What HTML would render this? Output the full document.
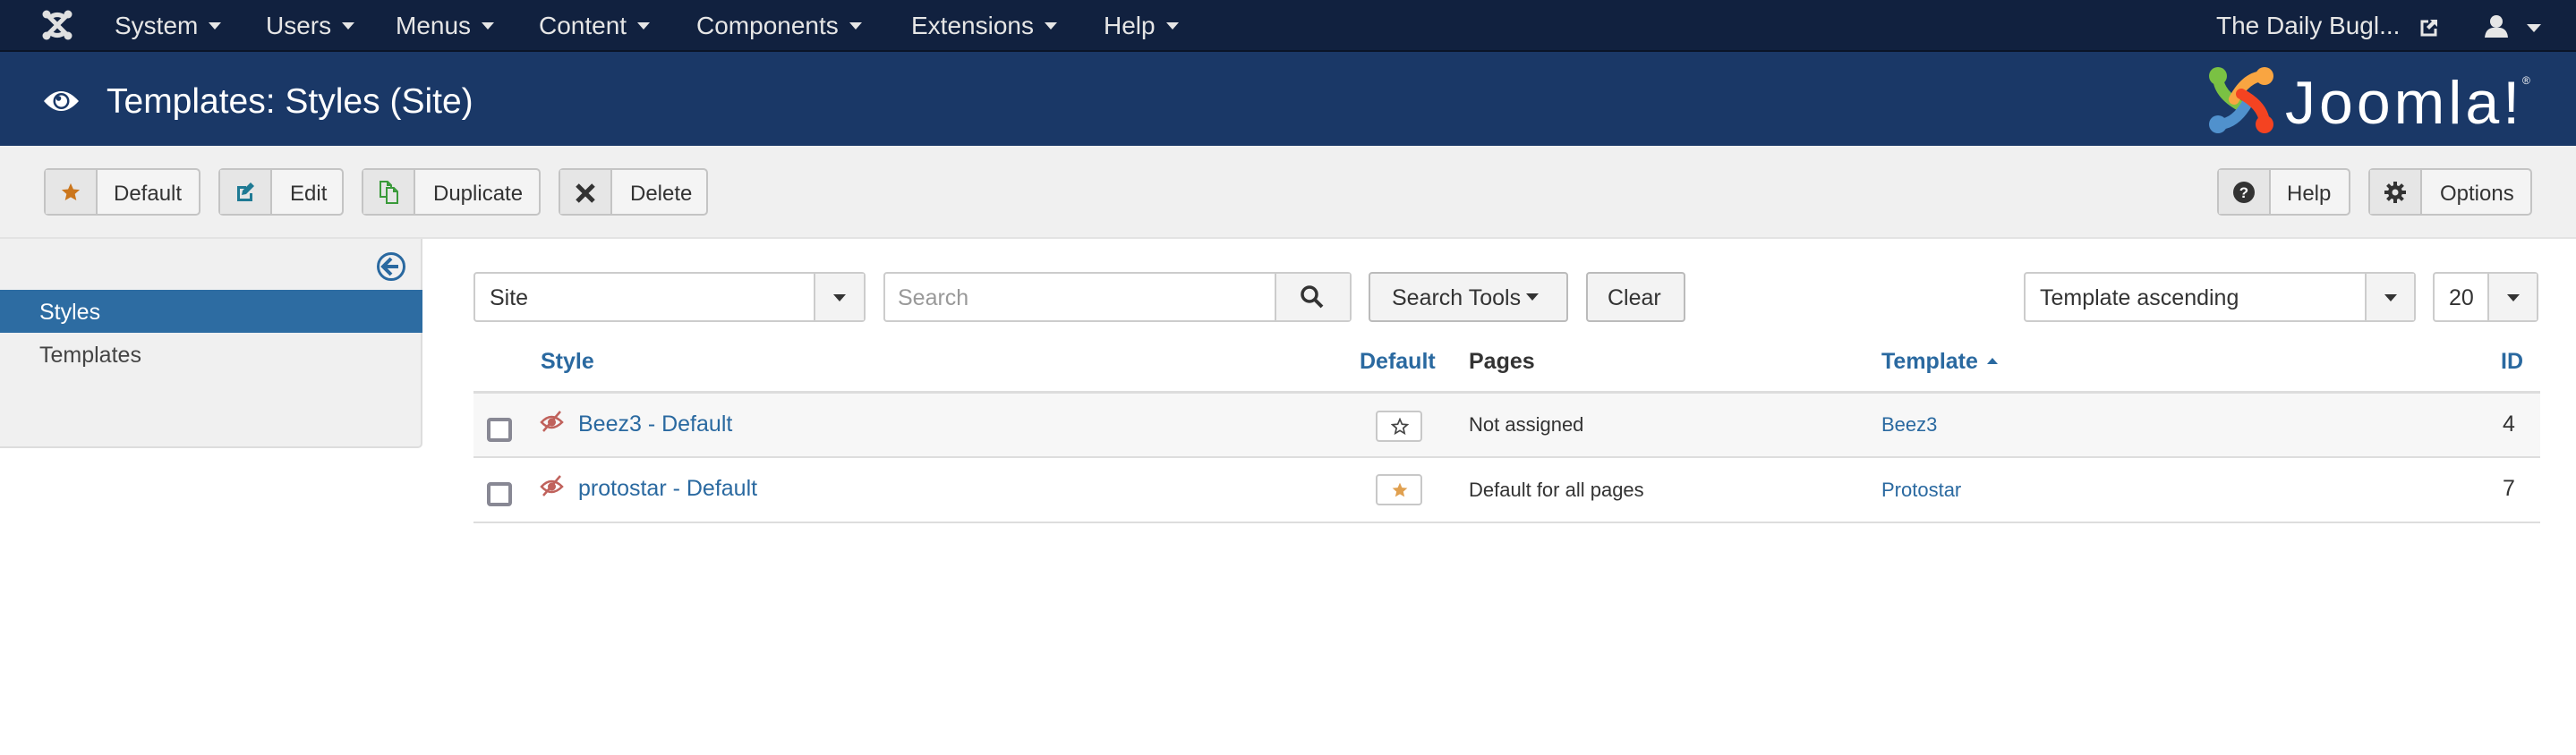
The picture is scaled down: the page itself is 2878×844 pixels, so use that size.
<!DOCTYPE html>
<html><head><meta charset="utf-8"><style>
*{box-sizing:border-box;margin:0;padding:0}
body{width:2878px;height:844px;position:relative;background:#fff;font-family:"Liberation Sans",Helvetica,Arial,sans-serif;overflow:hidden;color:#333}
.a{position:absolute;white-space:nowrap}
#nav{left:0;top:0;width:2878px;height:58px;background:#11213f;border-bottom:2px solid #0a1528}
.ni{color:#e6e6e6;font-size:28px;top:13px}
.car{display:inline-block;width:0;height:0;border-left:7px solid transparent;border-right:7px solid transparent;border-top:8px solid currentColor;vertical-align:middle;margin-left:12px;margin-top:-4px}
#hdr{left:0;top:58px;width:2878px;height:105px;background:#1a3867}
#tb{left:0;top:163px;width:2878px;height:104px;background:#f0f0f0;border-bottom:2px solid #e3e3e3}
.btn{top:188px;height:53px;border:2px solid #c4c4c4;border-radius:5px;background:#f4f4f4;font-size:24px;color:#333}
.btn .ic{position:absolute;left:0;top:0;bottom:0;background:#e6e6e6;border-right:2px solid #c4c4c4}
.btn .t{position:absolute;top:13px}
#side{left:0;top:267px;width:472px;height:234px;background:#f0f0f0;border-right:2px solid #ddd;border-bottom:2px solid #ddd;border-radius:0 0 5px 0}
.sel{height:56px;border:2px solid #ccc;border-radius:4px;background:#fff;font-size:25px;top:304px}
.sel .dd{position:absolute;top:0;bottom:0;right:0;background:#f3f3f3;border-left:2px solid #ccc}
.sel .dd:after{content:"";position:absolute;left:50%;top:50%;margin:-3px 0 0 -7px;border-left:7px solid transparent;border-right:7px solid transparent;border-top:8px solid #333}
.th{top:390px;font-size:25px;font-weight:bold;color:#2a69a0}
.lnk{color:#2a69a0}
.cb{width:28px;height:27px;border:4px solid #888894;border-radius:4px;background:#fff}
.sb{width:52px;height:35px;border:2px solid #c8c8c8;border-radius:4px;background:#fff}
</style></head><body>
<div id="nav" class="a">
<svg class="a" style="left:47px;top:11px" width="34" height="34" viewBox="0 0 34 34"><g fill="#e0e0e0"><circle cx="5" cy="5" r="4.5"/><circle cx="29" cy="5" r="4.5"/><circle cx="5" cy="29" r="4.5"/><circle cx="29" cy="29" r="4.5"/></g><g stroke="#e0e0e0" stroke-width="5" fill="none"><path d="M5 5 L27 27 M29 5 L7 27 M8 9 Q17 2 26 9 M8 25 Q17 32 26 25"/></g></svg>
<div class="a ni" style="left:128px">System<span class="car"></span></div>
<div class="a ni" style="left:297px">Users<span class="car"></span></div>
<div class="a ni" style="left:442px">Menus<span class="car"></span></div>
<div class="a ni" style="left:602px">Content<span class="car"></span></div>
<div class="a ni" style="left:778px">Components<span class="car"></span></div>
<div class="a ni" style="left:1018px">Extensions<span class="car"></span></div>
<div class="a ni" style="left:1233px">Help<span class="car"></span></div>
<div class="a ni" style="left:2476px">The Daily Bugl...</div>
<svg class="a" style="left:2704px;top:21px" width="20" height="20" viewBox="0 0 20 20"><path d="M9 3H2v15h15v-7" stroke="#e6e6e6" stroke-width="3" fill="none"/><path d="M11 1h8v8l-3-3-6 6-3-3 6-6z" fill="#e6e6e6"/></svg>
<svg class="a" style="left:2776px;top:16px" width="26" height="26" viewBox="0 0 26 26"><circle cx="13" cy="8" r="7" fill="#e6e6e6"/><path d="M0 26 Q1 16 9 15 L17 15 Q25 16 26 26Z" fill="#e6e6e6"/></svg>
<div class="a" style="left:2823px;top:27px;border-left:8px solid transparent;border-right:8px solid transparent;border-top:9px solid #e6e6e6"></div>
</div>
<div id="hdr" class="a">
<svg class="a" style="left:48px;top:41px" width="41" height="28" viewBox="0 0 41 28"><path d="M1 14 Q20 -8 40 14 Q20 36 1 14Z" fill="#fff"/><circle cx="20.5" cy="14" r="9" fill="#1a3867"/><circle cx="20.5" cy="14" r="6.5" fill="#fff"/><circle cx="17.5" cy="11" r="2.8" fill="#1a3867"/></svg>
<div class="a" style="left:119px;top:34px;font-size:39px;color:#fff">Templates: Styles (Site)</div>
<svg class="a" style="left:2466px;top:17px" width="76" height="74" viewBox="0 0 76 74"><g stroke-width="12" fill="none" stroke-linecap="round"><path d="M12 10 Q12 30 38 44" stroke="#7ac143"/><path d="M64 10 Q44 10 30 36" stroke="#f9a541"/><path d="M12 64 Q32 64 46 38" stroke="#5091cd"/><path d="M64 64 Q64 44 38 30" stroke="#f44321"/></g><circle cx="12" cy="10" r="10" fill="#7ac143"/><circle cx="64" cy="10" r="10" fill="#f9a541"/><circle cx="12" cy="64" r="10" fill="#5091cd"/><circle cx="64" cy="64" r="10" fill="#f44321"/></svg>
<div class="a" style="left:2553px;top:18px;font-size:68px;color:#fff;letter-spacing:4px">Joomla!</div>
<div class="a" style="left:2818px;top:25px;font-size:12px;color:#fff">®</div>
</div>
<div id="tb" class="a"></div>
<div class="a btn" style="left:49px;width:175px"><div class="ic" style="width:58px"><svg style="position:absolute;left:17px;top:14px" width="22" height="22" viewBox="0 0 24 24"><path d="M12 1l3.2 7.2 7.8.7-5.9 5.2 1.8 7.7L12 17.8 5.1 21.8l1.8-7.7L1 8.9l7.8-.7z" fill="#cb761c"/></svg></div><span class="t" style="left:76px">Default</span></div>
<div class="a btn" style="left:244px;width:140px"><div class="ic" style="width:58px"><svg style="position:absolute;left:16px;top:13px" width="24" height="24" viewBox="0 0 24 24"><path d="M3 5h10v3H6v11h11v-6h3v9H3z" fill="#1f7a94"/><path d="M18 1l4 4-9 9-5 1 1-5z" fill="#1f7a94"/></svg></div><span class="t" style="left:78px">Edit</span></div>
<div class="a btn" style="left:404px;width:200px"><div class="ic" style="width:58px"><svg style="position:absolute;left:18px;top:12px" width="22" height="26" viewBox="0 0 22 26"><path d="M1 1h8l4 4v13H1z M9 1v4h4" stroke="#3a9a3a" stroke-width="2" fill="none"/><path d="M8 8h8l4 4v13H8z M16 8v4h4" stroke="#3a9a3a" stroke-width="2" fill="#e6e6e6"/></svg></div><span class="t" style="left:78px">Duplicate</span></div>
<div class="a btn" style="left:624px;width:167px"><div class="ic" style="width:58px"><svg style="position:absolute;left:16px;top:14px" width="24" height="24" viewBox="0 0 24 24"><path d="M3 3L21 21M21 3L3 21" stroke="#333" stroke-width="5"/></svg></div><span class="t" style="left:78px">Delete</span></div>
<div class="a btn" style="left:2477px;width:149px"><div class="ic" style="width:58px"><svg style="position:absolute;left:16px;top:13px" width="24" height="24" viewBox="0 0 24 24"><circle cx="12" cy="12" r="12" fill="#333"/><text x="12" y="18" font-size="17" font-weight="bold" fill="#fff" text-anchor="middle" font-family="Liberation Sans">?</text></svg></div><span class="t" style="left:76px">Help</span></div>
<div class="a btn" style="left:2646px;width:183px"><div class="ic" style="width:58px"><svg style="position:absolute;left:16px;top:13px" width="24" height="24" viewBox="0 0 24 24"><g fill="#333"><circle cx="12" cy="12" r="8"/><path d="M10 0h4v24h-4zM0 10h24v4H0z"/><path d="M10 0h4v24h-4zM0 10h24v4H0z" transform="rotate(45 12 12)"/></g><circle cx="12" cy="12" r="3.5" fill="#e6e6e6"/></svg></div><span class="t" style="left:78px">Options</span></div>

<div id="side" class="a">
<svg class="a" style="left:420px;top:14px" width="34" height="34" viewBox="0 0 34 34"><circle cx="17" cy="17" r="14.5" stroke="#2a69a0" stroke-width="3" fill="none"/><path d="M17 8l-9 9 9 9M8 17h17" stroke="#2a69a0" stroke-width="4" fill="none"/></svg>
<div class="a" style="left:0;top:57px;width:472px;height:48px;background:#2d6ca2"></div>
<div class="a" style="left:44px;top:68px;font-size:25px;color:#fff">Styles</div>
<div class="a" style="left:44px;top:116px;font-size:25px;color:#444">Templates</div>
</div>

<div class="a sel" style="left:529px;width:438px"><span class="a" style="left:16px;top:13px">Site</span><div class="dd" style="width:56px"></div></div>
<div class="a sel" style="left:987px;width:523px"><span class="a" style="left:14px;top:13px;color:#999">Search</span><div class="a" style="right:0;top:0;bottom:0;width:84px;background:#f3f3f3;border-left:2px solid #ccc"><svg style="position:absolute;left:26px;top:12px" width="28" height="28" viewBox="0 0 28 28"><circle cx="11" cy="11" r="8" stroke="#333" stroke-width="3.5" fill="none"/><path d="M17 17l8 8" stroke="#333" stroke-width="4"/></svg></div></div>
<div class="a sel" style="left:1529px;width:223px;background:#f3f3f3;border-color:#bbb"><span class="a" style="left:24px;top:13px">Search Tools<span class="car" style="margin-left:6px;border-top-color:#333"></span></span></div>
<div class="a sel" style="left:1772px;width:111px;background:#f3f3f3;border-color:#bbb"><span class="a" style="left:22px;top:13px">Clear</span></div>
<div class="a sel" style="left:2261px;width:438px"><span class="a" style="left:16px;top:13px">Template ascending</span><div class="dd" style="width:55px"></div></div>
<div class="a sel" style="left:2718px;width:118px"><span class="a" style="left:16px;top:13px">20</span><div class="dd" style="width:55px"></div></div>

<div class="a th" style="left:604px">Style</div>
<div class="a th" style="left:1519px">Default</div>
<div class="a th" style="left:1641px;color:#333">Pages</div>
<div class="a th" style="left:2102px">Template<span class="a" style="left:118px;top:10px;border-left:6px solid transparent;border-right:6px solid transparent;border-bottom:7px solid #2a69a0"></span></div>
<div class="a th" style="left:2794px">ID</div>
<div class="a" style="left:529px;top:437px;width:2309px;height:3px;background:#ddd"></div>
<div class="a" style="left:529px;top:440px;width:2309px;height:71px;background:#f7f7f7"></div>
<div class="a" style="left:529px;top:510px;width:2309px;height:2px;background:#ddd"></div>
<div class="a" style="left:529px;top:583px;width:2309px;height:2px;background:#ddd"></div>

<div class="a cb" style="left:544px;top:467px"></div>
<div class="a cb" style="left:544px;top:539px"></div>
<svg class="a" style="left:603px;top:459px" width="27" height="24" viewBox="0 0 27 24"><path d="M2 13 Q13 1 25 13 Q13 25 2 13Z" stroke="#c0625c" stroke-width="2.5" fill="none"/><circle cx="13.5" cy="13" r="4.5" fill="#c0625c"/><path d="M4 23L23 1" stroke="#c0625c" stroke-width="2.5"/></svg>
<svg class="a" style="left:603px;top:531px" width="27" height="24" viewBox="0 0 27 24"><path d="M2 13 Q13 1 25 13 Q13 25 2 13Z" stroke="#c0625c" stroke-width="2.5" fill="none"/><circle cx="13.5" cy="13" r="4.5" fill="#c0625c"/><path d="M4 23L23 1" stroke="#c0625c" stroke-width="2.5"/></svg>
<div class="a lnk" style="left:646px;top:460px;font-size:25px">Beez3 - Default</div>
<div class="a lnk" style="left:646px;top:532px;font-size:25px">protostar - Default</div>
<div class="a sb" style="left:1537px;top:459px"><svg style="position:absolute;left:15px;top:6px" width="20" height="20" viewBox="0 0 24 24"><path d="M12 2l2.9 6.6 7.1.6-5.4 4.7 1.6 7L12 17.2 5.8 20.9l1.6-7L2 9.2l7.1-.6z" stroke="#444" stroke-width="2" fill="none"/></svg></div>
<div class="a sb" style="left:1537px;top:530px"><svg style="position:absolute;left:15px;top:6px" width="20" height="20" viewBox="0 0 24 24"><path d="M12 2l2.9 6.6 7.1.6-5.4 4.7 1.6 7L12 17.2 5.8 20.9l1.6-7L2 9.2l7.1-.6z" fill="#e0a050"/></svg></div>
<div class="a" style="left:1641px;top:462px;font-size:22px">Not assigned</div>
<div class="a" style="left:1641px;top:535px;font-size:22px">Default for all pages</div>
<div class="a lnk" style="left:2102px;top:462px;font-size:22px">Beez3</div>
<div class="a lnk" style="left:2102px;top:535px;font-size:22px">Protostar</div>
<div class="a" style="left:2796px;top:460px;font-size:25px">4</div>
<div class="a" style="left:2796px;top:532px;font-size:25px">7</div>
</body></html>
